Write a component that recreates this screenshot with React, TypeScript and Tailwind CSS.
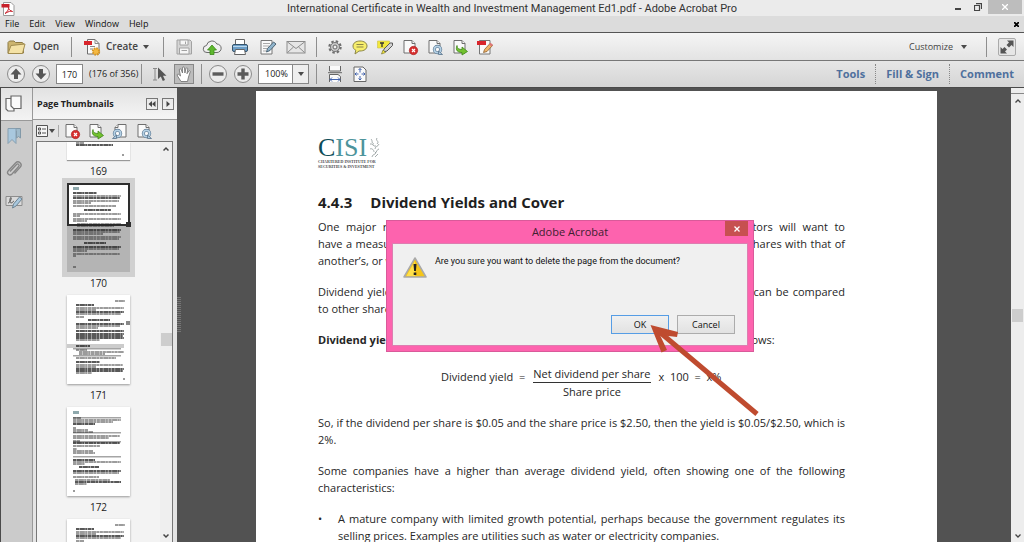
import type { ReactNode } from "react";

interface IconProps {
  children: ReactNode;
  size?: string;
}

function Icon({ children, size = "w-5 h-5" }: IconProps) {
  return (
    <svg className={`${size} shrink-0`} viewBox="0 0 20 20" fill="none">
      {children}
    </svg>
  );
}

function SheetShape() {
  return (
    <g stroke="#6e6e6e" fill="#fafafa">
      <path d="M4 3.5h8l3 3V16H4z" />
      <path d="M12 3.5v3h3" />
    </g>
  );
}

function FolderIcon() {
  return (
    <Icon>
      <path d="M2 16V5.5L3.5 4h4.500l1.500 1.500H16l1.500 1V16z" fill="#cdb56f" stroke="#8d7a45" />
      <path d="M2 16.500 5 8.500l14-1.500-2.500 9.500z" fill="#f4e2a6" stroke="#a18c50" />
    </Icon>
  );
}

function CreateIcon() {
  return (
    <Icon>
      <path d="M5.500 2.500H13l4 4v10.500H5.500z" fill="#fafafa" stroke="#6e6e6e" />
      <path d="M13 2.500v4h4M8 9.500h5M8 12h3" stroke="#8a8a8a" />
      <rect x="2" y="4" width="8" height="4" fill="#d8252c" />
      <circle cx="14" cy="14.500" r="3.200" fill="#f5b942" stroke="#d39323" strokeDasharray="1.500 1" strokeWidth="2" />
    </Icon>
  );
}

function SaveIcon() {
  return (
    <Icon>
      <path d="M3 3h13l1.500 1.500V17H3z" fill="#d5d5d5" stroke="#a2a2a2" />
      <path d="M6 3h8v5H6zM5.500 11h9.500v6H5.500z" fill="#f6f6f6" stroke="#a2a2a2" />
      <path d="M11.500 4.500v2.500M7.500 13.500h5.500" stroke="#a2a2a2" />
    </Icon>
  );
}

function CloudIcon() {
  return (
    <Icon>
      <path
        d="M5 15.500a3.500 3.500 0 0 1-.500-7 5.500 5.500 0 0 1 10.300-1.500A4.200 4.200 0 0 1 15 15.500z"
        fill="#f0f0f0"
        stroke="#6b6b6b"
      />
      <path d="m10 8 4.500 5H12v4.500H8V13H5.500z" fill="#5eb82e" stroke="#3c8a1b" strokeWidth=".8" />
    </Icon>
  );
}

function PrintIcon() {
  return (
    <Icon>
      <path d="M5.500 2.500h9V9h-9z" fill="#fff" stroke="#666" />
      <rect x="2.500" y="7.500" width="15" height="7" rx="1.500" fill="#6d9fc8" stroke="#35536b" />
      <path d="M3 9.500h14" stroke="#b9d8ee" />
      <path d="M5.500 12.500h9l1 5h-11z" fill="#fff" stroke="#666" />
    </Icon>
  );
}

function EditIcon() {
  return (
    <Icon>
      <path d="M3 3.500h11V17H3z" fill="#fafafa" stroke="#777" />
      <path d="M5 6.500h7M5 9h6M5 11.500h4M5 14h3" stroke="#aaa" />
      <path d="m8.500 15 1-3.500L15.500 5l2.500 2-6 6.500z" fill="#8fb4cc" stroke="#4d6474" />
    </Icon>
  );
}

function MailIcon() {
  return (
    <Icon>
      <rect x="1" y="4.500" width="18" height="11.500" fill="#e6e6e6" stroke="#8c8c8c" />
      <path d="m1.500 5 8.500 6.500L18.500 5M1.500 15.500 7.500 10M18.500 15.500 12.500 10" stroke="#8c8c8c" />
    </Icon>
  );
}

function GearIcon() {
  return (
    <Icon>
      <circle cx="10" cy="10" r="5.600" stroke="#6f6f6f" strokeWidth="2.200" strokeDasharray="2.400 2" />
      <circle cx="10" cy="10" r="4.500" fill="#c9c9c9" stroke="#777" />
      <circle cx="10" cy="10" r="2" fill="#f0f0f0" stroke="#666" />
    </Icon>
  );
}

function CommentIcon() {
  return (
    <Icon>
      <path
        d="M10 4c4 0 7 2 7 5s-3 5-7 5H9l-4 3 .800-3.800C4 12.400 3 11 3 9c0-3 3-5 7-5z"
        fill="#f7ee6c"
        stroke="#8c8748"
      />
      <path d="M6.500 7.500h7M6.500 10h7" stroke="#8c8748" />
    </Icon>
  );
}

function HighlightIcon() {
  return (
    <Icon>
      <path d="M2.500 4h12v7h-12z" fill="#f3e83c" stroke="#c9c04a" strokeWidth=".6" />
      <path d="M5 6h4M7 6v4" stroke="#333" strokeWidth="1.300" />
      <path d="m8.500 15 .500-3L15 6h2.500v2.500L12 14z" fill="#d2d2d2" stroke="#5a5a5a" />
      <path d="m6.500 17 1.500-4 2.500 2.500z" fill="#f3e83c" stroke="#7b7630" strokeWidth=".7" />
    </Icon>
  );
}

function DeletePageIcon() {
  return (
    <Icon>
      <SheetShape />
      <circle cx="13.500" cy="13.500" r="4.200" fill="#d62f2f" stroke="#a81d1d" strokeWidth=".6" />
      <path d="m12 12 3 3m0-3-3 3" stroke="#fff" strokeWidth="1.200" />
    </Icon>
  );
}

function RotateIcon({ left = false }: { left?: boolean }) {
  return (
    <Icon>
      <g transform={left ? "matrix(-1 0 0 1 20 0)" : undefined}>
        <SheetShape />
        <circle cx="12.500" cy="12.500" r="3.200" stroke="#56718a" strokeWidth="3" />
        <circle cx="12.500" cy="12.500" r="3.200" stroke="#b4d0e4" strokeWidth="1.800" />
        <path d="M13.500 17.500v-3.500l4 3.500z" fill="#b4d0e4" stroke="#56718a" strokeWidth=".8" />
      </g>
    </Icon>
  );
}

function ExtractIcon() {
  return (
    <Icon>
      <SheetShape />
      <path
        d="M7 8.500c0 3 2 4 5 4V10l5.500 4.500-5.500 3.500v-2.500c-4 0-7-2-5-7z"
        fill="#73c22f"
        stroke="#3f861a"
        strokeWidth=".8"
      />
    </Icon>
  );
}

function MarkupIcon() {
  return (
    <Icon>
      <path d="M4.500 3.500H15V17H4.500z" fill="#fafafa" stroke="#777" />
      <rect x="2" y="4" width="9" height="4" fill="#d8252c" />
      <path d="m8.500 15.500 1-3L15 6.500l2.500 2-5.500 6z" fill="#f0b469" stroke="#8a5f2e" strokeWidth=".8" />
      <path d="m14 7.500 1.500-1.700 2.500 2-1.500 1.700z" fill="#d77" />
    </Icon>
  );
}

function ArrowIcon({ down = false }: { down?: boolean }) {
  return (
    <Icon>
      <circle cx="10" cy="10" r="8.500" fill="#ececec" stroke="#8a8a8a" />
      <path
        d={down ? "M8 5h4v4.500h3.500L10 15.500 4.500 9.500H8z" : "M8 15h4v-4.500h3.500L10 4.500 4.500 10.500H8z"}
        fill="#555"
      />
    </Icon>
  );
}

function ZoomIcon({ plus = false }: { plus?: boolean }) {
  return (
    <Icon>
      <circle cx="10" cy="10" r="8.500" fill="#ececec" stroke="#8a8a8a" />
      <path d={plus ? "M4.500 10h11M10 4.500v11" : "M4.500 10h11"} stroke="#5c5c5c" strokeWidth="3.400" />
    </Icon>
  );
}

function SelectIcon() {
  return (
    <Icon>
      <path d="M3 4.500h4M5 4.500V16M3 16h4" stroke="#888" />
      <path d="M8 3.500V15l2.800-2.500 2 4.500 2.200-1-2-4.200h3.500z" fill="#555" />
    </Icon>
  );
}

function HandIcon() {
  return (
    <Icon>
      <path
        d="M7 17.500 3.500 12c-1-1.800.500-2.500 1.600-1.300L6.500 12 5.300 6c-.200-1.500 1.500-1.700 2-.300L8.500 9 8.400 4c0-1.400 2-1.400 2.100 0l.400 5 1-4.400c.400-1.300 2-.900 1.900.400L13 9.700l1.700-2.500c.800-1 2-.300 1.500.800L14.500 13l-1 4.500z"
        fill="#fff"
        stroke="#777"
        strokeWidth=".9"
      />
    </Icon>
  );
}

function FitWidthIcon() {
  return (
    <Icon>
      <path d="M4.500 2v5h11V2M4.500 18v-7.500h8.500l2.500 2V18" fill="#fafafa" stroke="#666" />
      <path d="M3 8.700h14" stroke="#666" />
      <path d="M5 15.500h10M7 13.500l-2 2 2 2M13 13.500l2 2-2 2" stroke="#4263ae" />
    </Icon>
  );
}

function FitPageIcon() {
  return (
    <Icon>
      <path d="M4 3h9l3 3v11.500H4z" fill="#fafafa" stroke="#666" />
      <path
        d="M10 4.500v4M10 12v4M5 10h3.500M11.500 10H15M8.500 6 10 4.500 11.500 6M8.500 14.500 10 16l1.500-1.500M6.500 8.500 5 10l1.500 1.500M13.500 8.500 15 10l-1.500 1.500"
        stroke="#4263ae"
      />
    </Icon>
  );
}

function Separator() {
  return <span className="w-px h-5 shrink-0 bg-[#8e8e8e]" />;
}

function Caret() {
  return <span className="block w-0 h-0 border-x-[3px] border-t-4 border-x-transparent border-t-[#4a4a4a]" />;
}

function ToolButton({ label, children }: { label: string; children: ReactNode }) {
  return (
    <button aria-label={label} className="shrink-0 w-5 h-5">
      {children}
    </button>
  );
}

function TitleBar() {
  return (
    <header className="h-4 shrink-0 flex items-start bg-[#ebebeb] text-[#333]">
      <svg className="w-4 h-4 mt-px shrink-0" viewBox="0 0 16 16" fill="none">
        <path d="M3.500 1.500H11l3 3v10H3.500z" fill="#fff" stroke="#999" />
        <rect x="1.500" y="3" width="8" height="3.500" fill="#c8202a" />
        <path d="M5 12.500c3-2 4-5 3.500-6.500-1 0 1.500 4.500 4 4.500-1-1.300-5 .500-7.500 2z" stroke="#c8202a" />
      </svg>
      <h1 className="flex-1 pl-[60px] text-center font-['Roboto',sans-serif] text-[11px] leading-[18px] whitespace-nowrap">
        International Certificate in Wealth and Investment Management Ed1.pdf - Adobe Acrobat Pro
      </h1>
      <button aria-label="Minimize" className="w-5 h-[14px] flex items-end justify-center pb-1">
        <span className="w-[6px] h-[2px] bg-[#444]" />
      </button>
      <button aria-label="Restore" className="w-5 h-[14px] flex items-center justify-center">
        <svg className="w-2 h-2" viewBox="0 0 8 8" fill="none" stroke="#444">
          <path d="M.5 2.500h5v5h-5zM2 .700h5.500V6" strokeWidth="1.200" />
        </svg>
      </button>
      <button aria-label="Close" className="w-[34px] h-[14px] mr-[2px] flex items-center justify-center bg-[#bdbdbd]">
        <svg className="w-[6px] h-[6px]" viewBox="0 0 6 6" stroke="#fff" strokeWidth="1.300">
          <path d="m0 0 6 6M6 0 0 6" />
        </svg>
      </button>
    </header>
  );
}

function MenuBar() {
  return (
    <nav className="h-4 shrink-0 flex items-center gap-[10px] px-[5px] bg-[#dcdcdc] text-[9px] text-[#111] font-medium">
      <button>File</button>
      <button>Edit</button>
      <button>View</button>
      <button>Window</button>
      <button>Help</button>
      <button aria-label="Close document" className="ml-auto">
        <svg className="w-[5px] h-[5px]" viewBox="0 0 5 5" stroke="#000" strokeWidth="1.800">
          <path d="m0 0 5 5M5 0 0 5" />
        </svg>
      </button>
    </nav>
  );
}

function MainToolbar() {
  return (
    <div className="h-7 shrink-0 flex items-center border-t border-[#555] bg-linear-to-b from-[#f5f5f5] to-[#e3e3e3] text-[#444] text-[10px]">
      <button className="w-[65px] ml-[6px] flex items-center gap-[7px] font-semibold">
        <FolderIcon />
        Open
      </button>
      <Separator />
      <button className="w-[81px] ml-[10px] flex items-center gap-1 font-semibold">
        <CreateIcon />
        Create
        <span className="ml-px">
          <Caret />
        </span>
      </button>
      <Separator />
      <div className="ml-[10px] mr-[10px] flex gap-2">
        <ToolButton label="Save"><SaveIcon /></ToolButton>
        <ToolButton label="Upload"><CloudIcon /></ToolButton>
        <ToolButton label="Print"><PrintIcon /></ToolButton>
        <ToolButton label="Sign"><EditIcon /></ToolButton>
        <ToolButton label="Email"><MailIcon /></ToolButton>
      </div>
      <Separator />
      <div className="ml-2 flex gap-[5px]">
        <ToolButton label="Preferences"><GearIcon /></ToolButton>
        <ToolButton label="Add note"><CommentIcon /></ToolButton>
        <ToolButton label="Highlight text"><HighlightIcon /></ToolButton>
        <ToolButton label="Delete pages"><DeletePageIcon /></ToolButton>
        <ToolButton label="Rotate pages"><RotateIcon /></ToolButton>
        <ToolButton label="Extract pages"><ExtractIcon /></ToolButton>
        <ToolButton label="Edit document"><MarkupIcon /></ToolButton>
      </div>
      <button className="ml-auto mr-[19px] flex items-center gap-2 text-[9px]">
        Customize
        <Caret />
      </button>
      <Separator />
      <button
        aria-label="Read mode"
        className="w-[18px] h-[18px] ml-[11px] mr-[8px] rounded-xs border border-[#aaa] bg-[#e6e6e6]"
      >
        <svg className="w-4 h-4" viewBox="0 0 16 16" fill="#555">
          <path d="M14.500 1.500v6.500l-2-2-2.500 2.500-2.500-2.500L10 3.500 8 1.500zM1.500 14.500V8l2 2L5.500 8 8 10.500l-2 2 2 2z" />
        </svg>
      </button>
    </div>
  );
}

function PageToolbar() {
  return (
    <div className="h-[27px] shrink-0 flex items-center border-t border-[#777] bg-linear-to-b from-[#e6e6e6] to-[#d5d5d5] text-[9px] text-[#222]">
      <div className="ml-[6px] flex gap-[5px]">
        <ToolButton label="Previous page"><ArrowIcon /></ToolButton>
        <ToolButton label="Next page"><ArrowIcon down /></ToolButton>
      </div>
      <input
        aria-label="Page number"
        defaultValue="170"
        className="w-[27px] h-5 ml-[5px] border border-[#888] bg-white text-center"
      />
      <span className="w-[52px] ml-[6px] whitespace-nowrap">(176 of 356)</span>
      <Separator />
      <div className="ml-2 mr-[7px] flex gap-[4px]">
        <ToolButton label="Select"><SelectIcon /></ToolButton>
        <button aria-label="Hand" className="w-5 h-5 border border-[#888] bg-[#bcbcbc] flex items-center justify-center">
          <HandIcon />
        </button>
      </div>
      <Separator />
      <div className="ml-[6px] flex gap-[5px]">
        <ToolButton label="Zoom out"><ZoomIcon /></ToolButton>
        <ToolButton label="Zoom in"><ZoomIcon plus /></ToolButton>
      </div>
      <div className="relative w-[51px] h-5 ml-[5px] mr-[7px]">
        <select
          aria-label="Zoom level"
          className="w-full h-full appearance-none border border-[#888] bg-white pl-[6px]"
        >
          <option>100%</option>
        </select>
        <span className="pointer-events-none absolute right-px inset-y-px w-4 flex items-center justify-center border-l border-[#888] bg-[#eee]">
          <Caret />
        </span>
      </div>
      <Separator />
      <div className="ml-2 flex gap-[5px]">
        <ToolButton label="Fit width"><FitWidthIcon /></ToolButton>
        <ToolButton label="Fit page"><FitPageIcon /></ToolButton>
      </div>
      <div className="ml-auto mr-[10px] flex items-center text-[11px] font-bold text-[#4f709d] whitespace-nowrap">
        <button className="pr-[10px]">Tools</button>
        <button className="px-[10px] h-5 border-x border-dotted border-[#888]">Fill &amp; Sign</button>
        <button className="pl-[10px]">Comment</button>
      </div>
    </div>
  );
}

function NavRail() {
  return (
    <div className="w-8 shrink-0 flex flex-col bg-[#cbcbcb] border-r border-[#999]">
      <button aria-label="Page thumbnails" className="h-8 pl-[3px] flex items-center bg-linear-to-b from-[#e2e2e2] to-[#f3f3f3]">
        <Icon>
          <g stroke="#666" strokeWidth="1.200" fill="#fafafa">
            <path d="M2 4.500h8V17H4l-2-2z" />
            <path d="M7 2h10v12.500H9.500L7 12z" />
          </g>
        </Icon>
      </button>
      <div className="pl-[3px] pt-[5px] flex flex-col gap-[13px] border-t border-[#999]">
        <ToolButton label="Bookmarks">
          <Icon>
            <path d="M9 2.500h7.500V12l-2-1.500-2 1.500V5z" fill="#9fbacb" stroke="#8299a8" />
            <path d="M4 2.500h8V17.500l-4-4-4 4z" fill="#a9c8de" stroke="#879fb0" />
          </Icon>
        </ToolButton>
        <ToolButton label="Attachments">
          <Icon>
            <path
              d="m6 12.500 6.500-7c1.500-1.500 3.500.500 2.200 2L8 15c-2.500 2.500-6-.500-3.700-3.300L11.500 4c3-3 7.500.800 4.800 4.200L10.500 14.500"
              stroke="#858585"
              strokeWidth="1.300"
            />
          </Icon>
        </ToolButton>
        <ToolButton label="Signatures">
          <Icon>
            <path d="M2 4.500h16v9H2z" fill="#dadada" stroke="#8d8d8d" />
            <path d="M4 11c2 0 4-5 3-5.500S5 11 7 11s2-2 3-2" stroke="#555" />
            <path d="m8.500 16 1-4L15.500 5l2.500 2-6 7z" fill="#a9c8de" stroke="#6d8494" />
          </Icon>
        </ToolButton>
      </div>
    </div>
  );
}

// [y, x, width, weight] of every line on a miniature page
type Row = [number, number, number, number];

const pageA: Row[] = [
  [10, 6, 24, 2], [13, 6, 48, 1], [15, 6, 47, 2], [18, 6, 46, 1], [20, 6, 18, 1],
  [23, 6, 43, 1], [27, 17, 27, 2], [31, 6, 48, 1], [33, 6, 7, 1], [36, 6, 48, 1],
  [38, 6, 14, 1], [41, 10, 44, 1], [43, 10, 37, 1], [47, 6, 48, 2], [49, 6, 47, 1],
  [51, 6, 30, 1], [54, 6, 48, 1], [56, 6, 46, 1], [60, 17, 22, 2], [64, 6, 48, 2],
  [66, 6, 46, 1], [68, 6, 14, 1], [71, 6, 47, 1], [73, 6, 3, 1], [84, 6, 3, 1],
];

const pageB: Row[] = [
  [6, 48, 10, 1], [10, 9, 18, 2], [13, 9, 48, 1], [15, 9, 20, 1], [17, 9, 48, 2],
  [19, 9, 45, 1], [22, 9, 8, 1], [25, 21, 22, 2], [29, 9, 48, 2], [31, 9, 44, 1],
  [33, 9, 22, 1], [36, 9, 48, 2], [39, 9, 48, 2], [41, 9, 47, 2], [43, 9, 48, 2],
  [45, 9, 24, 1], [51, 9, 14, 2], [55, 9, 11, 1], [57, 12, 45, 1], [59, 12, 26, 1],
  [63, 9, 40, 1], [67, 9, 24, 2], [70, 9, 47, 1], [72, 9, 20, 1], [74, 9, 48, 2],
  [76, 9, 47, 2], [78, 9, 16, 1], [84, 56, 2, 1],
];

const pageC: Row[] = [
  [11, 6, 8, 1], [13, 6, 48, 1], [15, 6, 40, 1], [17, 6, 22, 2], [21, 6, 3, 1],
  [23, 6, 15, 1], [25, 6, 20, 1], [29, 6, 47, 1], [31, 6, 36, 1], [34, 6, 7, 1],
  [36, 6, 47, 2], [39, 6, 27, 1], [42, 6, 4, 1], [44, 6, 20, 1], [46, 6, 22, 1],
  [53, 6, 22, 2], [55, 6, 48, 1], [57, 6, 12, 1], [60, 12, 20, 2], [64, 6, 48, 2],
  [66, 6, 46, 1], [70, 6, 26, 1], [73, 8, 35, 1], [75, 8, 46, 2], [77, 8, 12, 1],
  [84, 6, 2, 1],
];

const bandsC = [10, 25, 34, 49];

function Miniature({ rows, bands = [], logo = false }: { rows: Row[]; bands?: number[]; logo?: boolean }) {
  return (
    <svg className="w-[63px] h-[89px] shrink-0" viewBox="0 0 63 89">
      {logo && <path d="M6 4h6v3H6z" fill="#8fa9ad" />}
      {bands.map((y) => (
        <path key={y} d={`M6 ${y}h48v1.500H6z`} fill="#a5a5a5" />
      ))}
      {rows.map(([y, x, width, weight]) => (
        <path
          key={`${y}-${x}`}
          d={`M${x} ${y}h${width}`}
          stroke="#222"
          strokeWidth={weight === 2 ? 1.6 : 0.9}
          strokeDasharray="3.300 .400 5.200 .300 2.100 .500"
        />
      ))}
    </svg>
  );
}

function Thumbnail({ label, children }: { label: string; children: ReactNode }) {
  return (
    <li className="flex flex-col items-center">
      {children}
      <span className="h-[23px] leading-[23px] text-[10px] text-[#222]">{label}</span>
    </li>
  );
}

function ThumbnailPanel() {
  return (
    <section className="flex-1 min-w-0 flex flex-col bg-[#e4e4e4] pr-1">
      <div className="h-8 -mr-1 shrink-0 flex items-center pl-1 pr-[3px] gap-1 bg-linear-to-b from-[#e2e2e2] to-[#f5f5f5] border-b border-[#999]">
        <h2 className="flex-1 text-[9px] font-bold text-[#222] whitespace-nowrap">Page Thumbnails</h2>
        <button aria-label="Collapse" className="w-3 h-3 border border-[#777] flex items-center justify-center">
          <svg className="w-2 h-2" viewBox="0 0 8 8" fill="#444">
            <path d="M4 1v6L.5 4zM7.500 1v6L4 4z" />
          </svg>
        </button>
        <button aria-label="Options menu" className="w-3 h-3 border border-[#777] flex items-center justify-center">
          <svg className="w-2 h-2" viewBox="0 0 8 8" fill="#444">
            <path d="M2.500 1v6L6 4z" />
          </svg>
        </button>
      </div>
      <div className="h-[21px] shrink-0 flex items-center pl-[2px] gap-[3px]">
        <button aria-label="Options" className="flex items-center">
          <svg className="w-[14px] h-3" viewBox="0 0 14 12" fill="none" stroke="#555">
            <path d="M1.500.5h11v11h-11z" fill="#f6f6f6" />
            <path d="M3.500 3h2v2h-2zM3.500 7h2v2h-2zM7 4h4M7 8h4" />
          </svg>
          <Caret />
        </button>
        <span className="w-px h-3 bg-[#aaa]" />
        <div className="flex gap-1">
          <ToolButton label="Delete"><DeletePageIcon /></ToolButton>
          <ToolButton label="Extract"><ExtractIcon /></ToolButton>
          <ToolButton label="Rotate left"><RotateIcon left /></ToolButton>
          <ToolButton label="Rotate right"><RotateIcon /></ToolButton>
        </div>
      </div>
      <div className="flex-1 min-h-0 ml-[3px] flex border border-b-0 border-[#777] bg-[#f3f3f3]">
        <ul className="flex-1 min-h-0 overflow-hidden flex flex-col">
          <Thumbnail label="169">
            <div className="h-[18px] flex items-end overflow-hidden bg-white shadow-[0_1px_1px_#999]">
              <Miniature rows={[[72, 9, 8, 1], [74, 9, 37, 2], [84, 55, 2, 1]]} />
            </div>
          </Thumbnail>
          <Thumbnail label="170">
            <div className="relative bg-[#b4b4b4] shadow-[0_0_0_5px_#d0d0d0]">
              <div className="absolute inset-x-0 top-0 h-[43px] bg-white border-2 border-[#2e2e2e]" />
              <div className="relative">
                <Miniature rows={pageA} logo />
              </div>
              <span className="absolute -right-px top-[39px] w-[5px] h-[5px] bg-[#2e2e2e]" />
            </div>
          </Thumbnail>
          <Thumbnail label="171">
            <div className="relative bg-white shadow-[0_1px_2px_#999]">
              <div className="absolute left-0 w-[57px] top-[49px] h-1 bg-[#ccc]" />
              <div className="relative">
                <Miniature rows={pageB} bands={[53, 60]} />
              </div>
              <span className="absolute right-0 top-[26px] w-1 h-1 bg-[#888]" />
            </div>
          </Thumbnail>
          <Thumbnail label="172">
            <div className="bg-white shadow-[0_1px_2px_#999]">
              <Miniature rows={pageC} bands={bandsC} logo />
            </div>
          </Thumbnail>
          <li className="flex justify-center">
            <div className="bg-white shadow-[0_1px_2px_#999]">
              <Miniature rows={pageB} />
            </div>
          </li>
        </ul>
        <div className="w-3 shrink-0 flex flex-col items-center bg-[#efefef]">
          <svg className="w-[6px] h-[6px] mt-1" viewBox="0 0 6 6" fill="none" stroke="#444" strokeWidth="1.500">
            <path d="M.5 4.500 3 2l2.500 2.500" />
          </svg>
          <span className="w-[11px] h-[13px] mt-[181px] bg-[#cdcdcd]" />
          <svg className="w-[6px] h-[6px] mt-auto mb-[3px]" viewBox="0 0 6 6" fill="none" stroke="#444" strokeWidth="1.500">
            <path d="M.5 1.500 3 4l2.500-2.500" />
          </svg>
        </div>
      </div>
    </section>
  );
}

function Paragraph({ lines, last }: { lines: string[]; last?: ReactNode }) {
  return (
    <p>
      {lines.map((line) => (
        <span key={line} className="block whitespace-nowrap text-justify [text-align-last:justify]">
          {line}
        </span>
      ))}
      {last && <span className="block whitespace-nowrap">{last}</span>}
    </p>
  );
}

function CisiLogo() {
  return (
    <div className="w-[60px] text-[#4d4d4d]">
      <div className="flex items-center h-[22px] font-['Liberation_Serif',serif] text-[26px] leading-[22px] text-[#4d949c]">
        <span className="text-[#0e4d59]">C</span>ISI
        <svg className="w-3 h-5 shrink-0 ml-[2px]" viewBox="0 0 12 20" fill="none" stroke="#8b9696" strokeWidth=".8">
          <path d="M2 1c2 2 0 4 3 5M8 0c-2 3 3 3 0 6M1 6c3-1 3 3 6 2M10 6c-1 3-4 2-4 5M1 11c2-1 4 1 4 3M10 11c-2 0-2 3-4 4M3 19c0-3 4-2 4-5M9 16l-3 3" />
        </svg>
      </div>
      <p className="font-['Liberation_Serif',serif] text-[4px] leading-[5px] font-bold whitespace-nowrap">
        CHARTERED INSTITUTE FOR
        <br />
        SECURITIES &amp; INVESTMENT
      </p>
    </div>
  );
}

function DocumentPage() {
  return (
    <article className="w-full max-w-[681px] mt-[3px] pl-[62px] pr-[92px] pt-[46px] bg-white font-['Open_Sans',sans-serif] text-[11px] leading-[17px] text-[#262626] overflow-hidden">
      <CisiLogo />
      <h2 className="mt-[21px] h-6 flex gap-[18px] items-center text-[15px] font-bold text-[#1f1f1f]">
        <span>4.4.3</span>
        <span>Dividend Yields and Cover</span>
      </h2>
      <div className="mt-1 flex flex-col gap-[14px]">
        <Paragraph
          lines={[
            "One major reason for buying shares is their income from dividends, so investors will want to",
            "have a measure that can compare the dividend they are getting from a company’s shares with that of",
          ]}
          last="another’s, or with the return on other investments."
        />
        <Paragraph
          lines={["Dividend yield is a measure of the return on an investment in a share, meaning it can be compared"]}
          last="to other shares or deposits."
        />
        <p className="whitespace-nowrap">
          <b>Dividend yield</b> is calculated by taking the dividend and dividing it by the price, as follows:
        </p>
      </div>
      <div className="mt-[17px] ml-[123px] flex items-start gap-2 whitespace-nowrap">
        <span className="mt-[3px]">Dividend yield&nbsp; =</span>
        <span className="flex flex-col text-center">
          <span className="border-b border-[#333]">Net dividend per share</span>
          <span>Share price</span>
        </span>
        <span className="mt-[3px]">x&nbsp; 100&nbsp; =&nbsp; x%</span>
      </div>
      <div className="mt-[14px] flex flex-col gap-[14px]">
        <Paragraph
          lines={["So, if the dividend per share is $0.05 and the share price is $2.50, then the yield is $0.05/$2.50, which is"]}
          last="2%."
        />
        <Paragraph
          lines={["Some companies have a higher than average dividend yield, often showing one of the following"]}
          last="characteristics:"
        />
        <ul>
          <li className="flex">
            <span className="w-5 shrink-0">•</span>
            <div className="flex-1 min-w-0">
              <Paragraph
                lines={["A mature company with limited growth potential, perhaps because the government regulates its"]}
                last="selling prices. Examples are utilities such as water or electricity companies."
              />
            </div>
          </li>
        </ul>
      </div>
    </article>
  );
}

function DeleteDialog() {
  return (
    <div
      role="dialog"
      aria-labelledby="dialog-title"
      className="absolute left-[386px] top-[220px] w-[368px] h-[132px] px-[5px] pb-[5px] flex flex-col border border-[#d95a9a] bg-[#fd63ae]"
    >
      <div className="relative h-[22px] shrink-0 flex items-center justify-center text-[11px] text-[#402030]">
        <h2 id="dialog-title">Adobe Acrobat</h2>
        <button aria-label="Close" className="absolute right-0 top-0 w-[23px] h-[15px] flex items-center justify-center bg-[#c75050]">
          <svg className="w-[6px] h-[6px]" viewBox="0 0 6 6" stroke="#fff" strokeWidth="1.300">
            <path d="m.5.5 5 5M5.500.5l-5 5" />
          </svg>
        </button>
      </div>
      <div className="flex-1 flex flex-col border border-[#dd7db0] bg-[#f0f0f0] pt-3 pl-[10px] pr-3 pb-[11px] text-[9px] text-[#111]">
        <div className="flex gap-2">
          <svg className="w-6 h-6" viewBox="0 0 24 24">
            <path d="M12 2 23 21H1z" fill="#f5c518" stroke="#a9a9a9" strokeWidth="1.500" strokeLinejoin="round" />
            <path d="M12 5 3.500 20H12z" fill="#ffe04a" />
            <path d="M10.500 8h3l-.600 7h-1.800zM10.700 16.500h2.600V19h-2.600z" fill="#222" />
          </svg>
          <p className="font-['Roboto',sans-serif] leading-[10px] whitespace-nowrap">
            Are you sure you want to delete the page from the document?
          </p>
        </div>
        <div className="mt-auto flex justify-end gap-2">
          <button className="w-[58px] h-[19px] border border-[#569de5] bg-linear-to-b from-[#f0f0f0] to-[#e2e2e2]">OK</button>
          <button className="w-[58px] h-[19px] border border-[#acacac] bg-linear-to-b from-[#f0f0f0] to-[#e2e2e2]">
            Cancel
          </button>
        </div>
      </div>
      <svg
        className="pointer-events-none absolute left-[259px] top-[99px] w-[120px] h-[100px]"
        viewBox="0 0 120 100"
        fill="none"
        stroke="#bf4b2f"
        strokeWidth="5"
      >
        <path d="M10 9 111 94" />
        <path d="M4.500 5 32 12 31 17 14 15l7 15-5.500 2.500z" fill="#bf4b2f" stroke="none" />
      </svg>
    </div>
  );
}

export default function App() {
  return (
    <div className="relative h-screen overflow-hidden flex flex-col bg-[#525252] font-['Open_Sans',sans-serif]">
      <TitleBar />
      <MenuBar />
      <MainToolbar />
      <PageToolbar />
      <main className="flex-1 min-h-0 flex border-t border-l border-[#4a4a4a]">
        <aside className="w-44 shrink-0 flex">
          <NavRail />
          <ThumbnailPanel />
        </aside>
        <div className="w-[5px] shrink-0 flex items-center">
          <svg className="w-1 h-9" viewBox="0 0 4 36" fill="none" stroke="#999" strokeDasharray="1 1">
            <path d="M1 0v36M3 0v36" />
          </svg>
        </div>
        <div className="flex-1 min-w-0 flex justify-center">
          <DocumentPage />
        </div>
        <div className="w-[13px] shrink-0 flex flex-col items-center bg-[#ededed]">
          <span className="w-full h-[6px] border-b border-[#888]" />
          <svg className="w-[6px] h-[6px] mt-1" viewBox="0 0 6 6" fill="none" stroke="#444" strokeWidth="1.300">
            <path d="M.5 4.500 3 2l2.500 2.500" />
          </svg>
          <span className="w-[11px] h-[13px] mt-[205px] bg-[#cdcdcd]" />
          <svg className="w-[6px] h-[6px] mt-auto mb-[3px]" viewBox="0 0 6 6" fill="none" stroke="#444" strokeWidth="1.300">
            <path d="M.5 1.500 3 4l2.500-2.500" />
          </svg>
        </div>
      </main>
      <DeleteDialog />
    </div>
  );
}
